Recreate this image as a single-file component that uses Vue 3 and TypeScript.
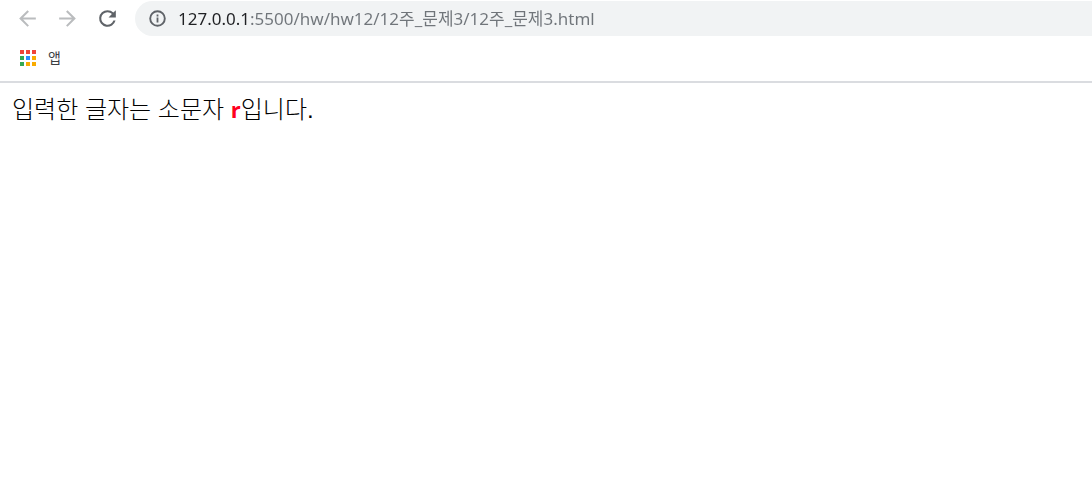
<script setup lang="ts">
import { ref } from 'vue'

const address = ref('127.0.0.1:5500/hw/hw12/12주_문제3/12주_문제3.html')
const letter = 'r'
const appColors: string[] = [
  '#f04438', '#f04438', '#f04438',
  '#34a853', '#2d8cff', '#f9ab00',
  '#34a853', '#f9ab00', '#f9ab00',
]
</script>

<template>
  <div class="browser">
    <header class="chrome">
      <nav class="toolbar">
        <button class="tool" type="button" aria-label="뒤로" disabled>
          <svg viewBox="0 0 24 24"><path d="M20 11H7.8l5.6-5.6L12 4l-8 8 8 8 1.4-1.4L7.8 13H20z" /></svg>
        </button>
        <button class="tool" type="button" aria-label="앞으로" disabled>
          <svg viewBox="0 0 24 24"><path d="M4 11h12.2l-5.6-5.6L12 4l8 8-8 8-1.4-1.4 5.6-5.6H4z" /></svg>
        </button>
        <button class="tool" type="button" aria-label="새로고침">
          <svg viewBox="0 0 24 24"><path d="M17.65 6.35A7.96 7.96 0 0 0 12 4a8 8 0 1 0 7.73 10h-2.08A6 6 0 1 1 12 6c1.66 0 3.14.69 4.22 1.78L13 11h7V4z" /></svg>
        </button>
        <div class="omnibox">
          <button class="info" type="button" aria-label="사이트 정보">
            <svg viewBox="0 0 17 17">
              <circle cx="8.5" cy="8.5" r="7.3" fill="none" stroke="currentColor" stroke-width="1.9" />
              <path d="M7.6 7.6h1.8v4.8H7.6zM7.6 4.6h1.8v1.8H7.6z" />
            </svg>
          </button>
          <input v-model="address" class="address" type="text" aria-label="주소창" spellcheck="false" />
        </div>
      </nav>
      <div class="bookmarks">
        <button class="apps" type="button">
          <span class="grid" aria-hidden="true">
            <i v-for="(color, i) in appColors" :key="i" :style="{ background: color }"></i>
          </span>
          <span>앱</span>
        </button>
      </div>
    </header>
    <main class="page">입력한 글자는 소문자 <b class="letter">{{ letter }}</b>입니다.</main>
  </div>
</template>

<style>
body {
  margin: 0;
  background: #fff;
}
</style>

<style scoped>
.browser {
  font-family: "Open Sans", "Noto Sans CJK KR", sans-serif;
}
.chrome {
  padding-bottom: 2px;
  border-bottom: 2px solid #dadce0;
}
.toolbar {
  display: flex;
  align-items: center;
  padding: 1px 0 0 7px;
}
button {
  border: 0;
  padding: 0;
  background: none;
  font: inherit;
}
svg {
  display: block;
  fill: currentColor;
}
.tool {
  display: flex;
  justify-content: center;
  width: 40px;
  color: #5f6368;
}
.tool:disabled {
  color: #babcbe;
}
.tool svg {
  width: 25px;
  height: 25px;
}
.omnibox {
  flex: 1;
  display: flex;
  align-items: center;
  gap: 12px;
  height: 35px;
  margin-left: 8px;
  padding-left: 14px;
  border-radius: 18px 0 0 18px;
  background: #f1f3f4;
}
.info {
  color: #5f6368;
}
.info svg {
  width: 17px;
  height: 17px;
}
.address {
  flex: 1;
  min-width: 0;
  height: 27px;
  border: 0;
  padding: 0 0 2px;
  outline: 0;
  background: linear-gradient(to right, #202124 71px, #70757a 71px);
  background-clip: text;
  -webkit-text-fill-color: transparent;
  color: #70757a;
  caret-color: #202124;
  font: 400 17px/24px "Noto Sans", "Noto Sans CJK KR", sans-serif;
}
.bookmarks {
  display: flex;
  align-items: center;
  height: 43px;
  padding-left: 20px;
}
.apps {
  display: flex;
  align-items: center;
  gap: 12px;
  color: #3c4043;
  font-size: 14px;
  line-height: 20px;
}
.grid {
  display: grid;
  grid-template-columns: repeat(3, 4px);
  grid-auto-rows: 4px;
  gap: 2px;
}
.page {
  padding: 8px 12px;
  color: #000;
  font: 300 24px/36px "Liberation Sans", "Noto Sans CJK KR", sans-serif;
}
.letter {
  color: #ff0020;
  font-family: "Open Sans", sans-serif;
  font-size: 22px;
  font-weight: 700;
}
</style>
